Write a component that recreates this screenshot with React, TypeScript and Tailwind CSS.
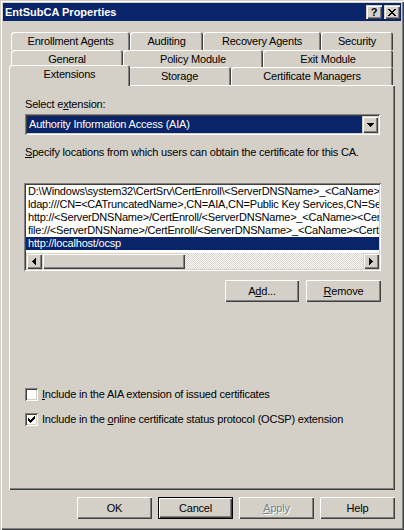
import React from "react";

const raised =
  "shadow-[inset_1px_1px_#ffffff,inset_-1px_-1px_#404040,inset_-2px_-2px_#808080]";
const raisedSoft =
  "shadow-[inset_1px_1px_#d4d0c8,inset_2px_2px_#ffffff,inset_-1px_-1px_#404040,inset_-2px_-2px_#808080]";
const sunken =
  "shadow-[inset_1px_1px_#808080,inset_-1px_-1px_#ffffff,inset_2px_2px_#404040,inset_-2px_-2px_#d4d0c8]";

type Px = [number, number, number, number];

function Pixels({ w, h, rects }: { w: number; h: number; rects: Px[] }) {
  return (
    <svg width={w} height={h} viewBox={`0 0 ${w} ${h}`} shapeRendering="crispEdges">
      {rects.map(([x, y, rw, rh], i) => (
        <rect key={i} x={x} y={y} width={rw} height={rh} fill="#000" />
      ))}
    </svg>
  );
}

const closeGlyph: Px[] = [
  [0, 0, 2, 1], [6, 0, 2, 1],
  [1, 1, 2, 1], [5, 1, 2, 1],
  [2, 2, 4, 1],
  [3, 3, 2, 1],
  [2, 4, 4, 1],
  [1, 5, 2, 1], [5, 5, 2, 1],
  [0, 6, 2, 1], [6, 6, 2, 1],
];

const leftArrow: Px[] = [[0, 3, 1, 1], [1, 2, 1, 3], [2, 1, 1, 5], [3, 0, 1, 7]];
const rightArrow: Px[] = [[0, 0, 1, 7], [1, 1, 1, 5], [2, 2, 1, 3], [3, 3, 1, 1]];
const downArrow: Px[] = [[0, 0, 7, 1], [1, 1, 5, 1], [2, 2, 3, 1], [3, 3, 1, 1]];
const checkGlyph: Px[] = [
  [6, 0, 1, 1],
  [5, 1, 2, 1],
  [0, 2, 1, 1], [4, 2, 3, 1],
  [0, 3, 2, 1], [3, 3, 3, 1],
  [0, 4, 5, 1],
  [1, 5, 3, 1],
  [2, 6, 1, 1],
];

function TitleBar() {
  return (
    <div className="flex h-[18px] items-center bg-[#0a246a] pl-[2px] pr-px">
      <span className="flex-1 text-[11px] font-bold tracking-normal text-white">
        EntSubCA Properties
      </span>
      <div className="flex gap-[2px]">
        <div className={`flex h-[14px] w-[16px] items-center justify-center bg-[#d4d0c8] ${raisedSoft}`}>
          <span className="text-[11px] font-bold leading-none text-black">?</span>
        </div>
        <div className={`flex h-[14px] w-[16px] items-center justify-center bg-[#d4d0c8] ${raisedSoft}`}>
          <Pixels w={8} h={7} rects={closeGlyph} />
        </div>
      </div>
    </div>
  );
}

type TabDef = { label: string; w: string; selected?: boolean };

const rows: { h: string; tabs: TabDef[] }[] = [
  {
    h: "h-[18px]",
    tabs: [
      { label: "Enrollment Agents", w: "w-[119px]" },
      { label: "Auditing", w: "w-[73px]" },
      { label: "Recovery Agents", w: "w-[118px]" },
      { label: "Security", w: "w-[72px]" },
    ],
  },
  {
    h: "h-[17px]",
    tabs: [
      { label: "General", w: "w-[112px]" },
      { label: "Policy Module", w: "w-[140px]" },
      { label: "Exit Module", w: "w-[130px]" },
    ],
  },
  {
    h: "h-[18px]",
    tabs: [
      { label: "Extensions", w: "w-[121px]", selected: true },
      { label: "Storage", w: "w-[103px]" },
      { label: "Certificate Managers", w: "w-[162px]" },
    ],
  },
];

function Tab({ label, w, selected }: TabDef) {
  const bevel =
    "shadow-[inset_1px_1px_#ffffff,inset_-1px_0_#404040,inset_-2px_0_#808080]";
  if (selected) {
    return (
      <div
        className={`relative z-10 -mx-[2px] -mt-[2px] flex h-[21px] shrink-0 justify-center rounded-t-[3px] bg-[#d4d0c8] pt-[3px] ${w} ${bevel}`}
      >
        {label}
      </div>
    );
  }
  return (
    <div
      className={`flex h-[18px] shrink-0 items-center justify-center rounded-t-[3px] bg-[#d4d0c8] ${w} ${bevel}`}
    >
      {label}
    </div>
  );
}

const locations = [
  "D:\\Windows\\system32\\CertSrv\\CertEnroll\\<ServerDNSName>_<CaName><CertificateName>.crt",
  "ldap:///CN=<CATruncatedName>,CN=AIA,CN=Public Key Services,CN=Services,<ConfigurationContainer><CAObjectClass>",
  "http://<ServerDNSName>/CertEnroll/<ServerDNSName>_<CaName><CertificateName>.crt",
  "file://<ServerDNSName>/CertEnroll/<ServerDNSName>_<CaName><CertificateName>.crt",
  "http://localhost/ocsp",
];

function Checkbox({ checked, children }: { checked?: boolean; children: React.ReactNode }) {
  return (
    <div className="flex h-[13px] items-center gap-[4px]">
      <div className={`flex h-[13px] w-[13px] items-center justify-center bg-white ${sunken}`}>
        {checked && <Pixels w={7} h={7} rects={checkGlyph} />}
      </div>
      <span>{children}</span>
    </div>
  );
}

function Button({
  children,
  isDefault,
  disabled,
  className = "w-[75px]",
}: {
  children: React.ReactNode;
  isDefault?: boolean;
  disabled?: boolean;
  className?: string;
}) {
  const bevel = isDefault
    ? "shadow-[inset_0_0_0_1px_#000000,inset_2px_2px_#ffffff,inset_-2px_-2px_#404040,inset_-3px_-3px_#808080]"
    : raised;
  return (
    <div
      className={`flex h-[22px] items-center justify-center bg-[#d4d0c8] ${bevel} ${className} ${
        disabled ? "text-[#808080] [text-shadow:1px_1px_0_#ffffff]" : ""
      }`}
    >
      {children}
    </div>
  );
}

function Panel() {
  return (
    <div className="flex h-[405px] flex-col bg-[#d4d0c8] pl-[15px] pr-[14px] pt-[13px] shadow-[inset_1px_1px_#ffffff,inset_-1px_-1px_#404040,inset_-2px_-2px_#808080]">
      <div className="pl-px">
        Select e<u>x</u>tension:
      </div>

      <div className={`mx-px mt-[3px] flex h-[21px] bg-white p-[2px] ${sunken}`}>
        <div className="flex flex-1 items-center bg-[#0a246a] pl-[2px] text-white">
          Authority Information Access (AIA)
        </div>
        <div className={`flex h-[17px] w-[16px] items-center justify-center bg-[#d4d0c8] ${raisedSoft}`}>
          <Pixels w={7} h={4} rects={downArrow} />
        </div>
      </div>

      <div className="mt-[11px] pl-px">
        <u>S</u>pecify locations from which users can obtain the certificate for this CA.
      </div>

      <div className={`mt-[24px] flex h-[88px] flex-col bg-white p-[2px] ${sunken}`}>
        <div className="flex flex-col">
          {locations.map((loc, i) => (
            <div
              key={loc}
              className={`h-[13px] overflow-hidden whitespace-nowrap pl-[2px] ${
                i === locations.length - 1 ? "bg-[#0a246a] text-white" : ""
              }`}
            >
              {loc}
            </div>
          ))}
        </div>
        <div className="mt-auto flex h-[16px]">
          <div className={`flex w-[16px] items-center justify-center bg-[#d4d0c8] ${raisedSoft}`}>
            <Pixels w={4} h={7} rects={leftArrow} />
          </div>
          <div className={`w-[143px] bg-[#d4d0c8] ${raisedSoft}`} />
          <div className="flex-1 bg-[image:repeating-conic-gradient(#ffffff_0_25%,#d4d0c8_0_50%)] bg-[length:2px_2px]" />
          <div className={`flex w-[16px] items-center justify-center bg-[#d4d0c8] ${raisedSoft}`}>
            <Pixels w={4} h={7} rects={rightArrow} />
          </div>
        </div>
      </div>

      <div className="mt-[9px] flex justify-end gap-[7px]">
        <Button className="w-[74px]">
          A<u>d</u>d...
        </Button>
        <Button className="w-[75px]">
          <u>R</u>emove
        </Button>
      </div>

      <div className="mt-[86px] flex flex-col gap-[12px] pl-px">
        <Checkbox>
          <u>I</u>nclude in the AIA extension of issued certificates
        </Checkbox>
        <Checkbox checked>
          Include in the <u>o</u>nline certificate status protocol (OCSP) extension
        </Checkbox>
      </div>
    </div>
  );
}

export default function App() {
  return (
    <div className="h-[530px] w-[404px] bg-[#d4d0c8] p-[3px] font-['Liberation_Sans',Arial,sans-serif] text-[11px] leading-[13px] tracking-[-0.2px] text-black shadow-[inset_1px_1px_#d4d0c8,inset_2px_2px_#ffffff,inset_-1px_-1px_#404040,inset_-2px_-2px_#808080]">
      <TitleBar />
      <div className="mt-[11px] px-[6px]">
        {rows.map((row, i) => (
          <div key={i} className={`ml-[2px] flex items-start ${row.h}`}>
            {row.tabs.map((t) => (
              <Tab key={t.label} {...t} />
            ))}
          </div>
        ))}
        <Panel />
        <div className="mt-[7px] flex justify-end gap-[6px]">
          <Button>OK</Button>
          <Button isDefault>Cancel</Button>
          <Button disabled>
            <u>A</u>pply
          </Button>
          <Button>Help</Button>
        </div>
      </div>
    </div>
  );
}
